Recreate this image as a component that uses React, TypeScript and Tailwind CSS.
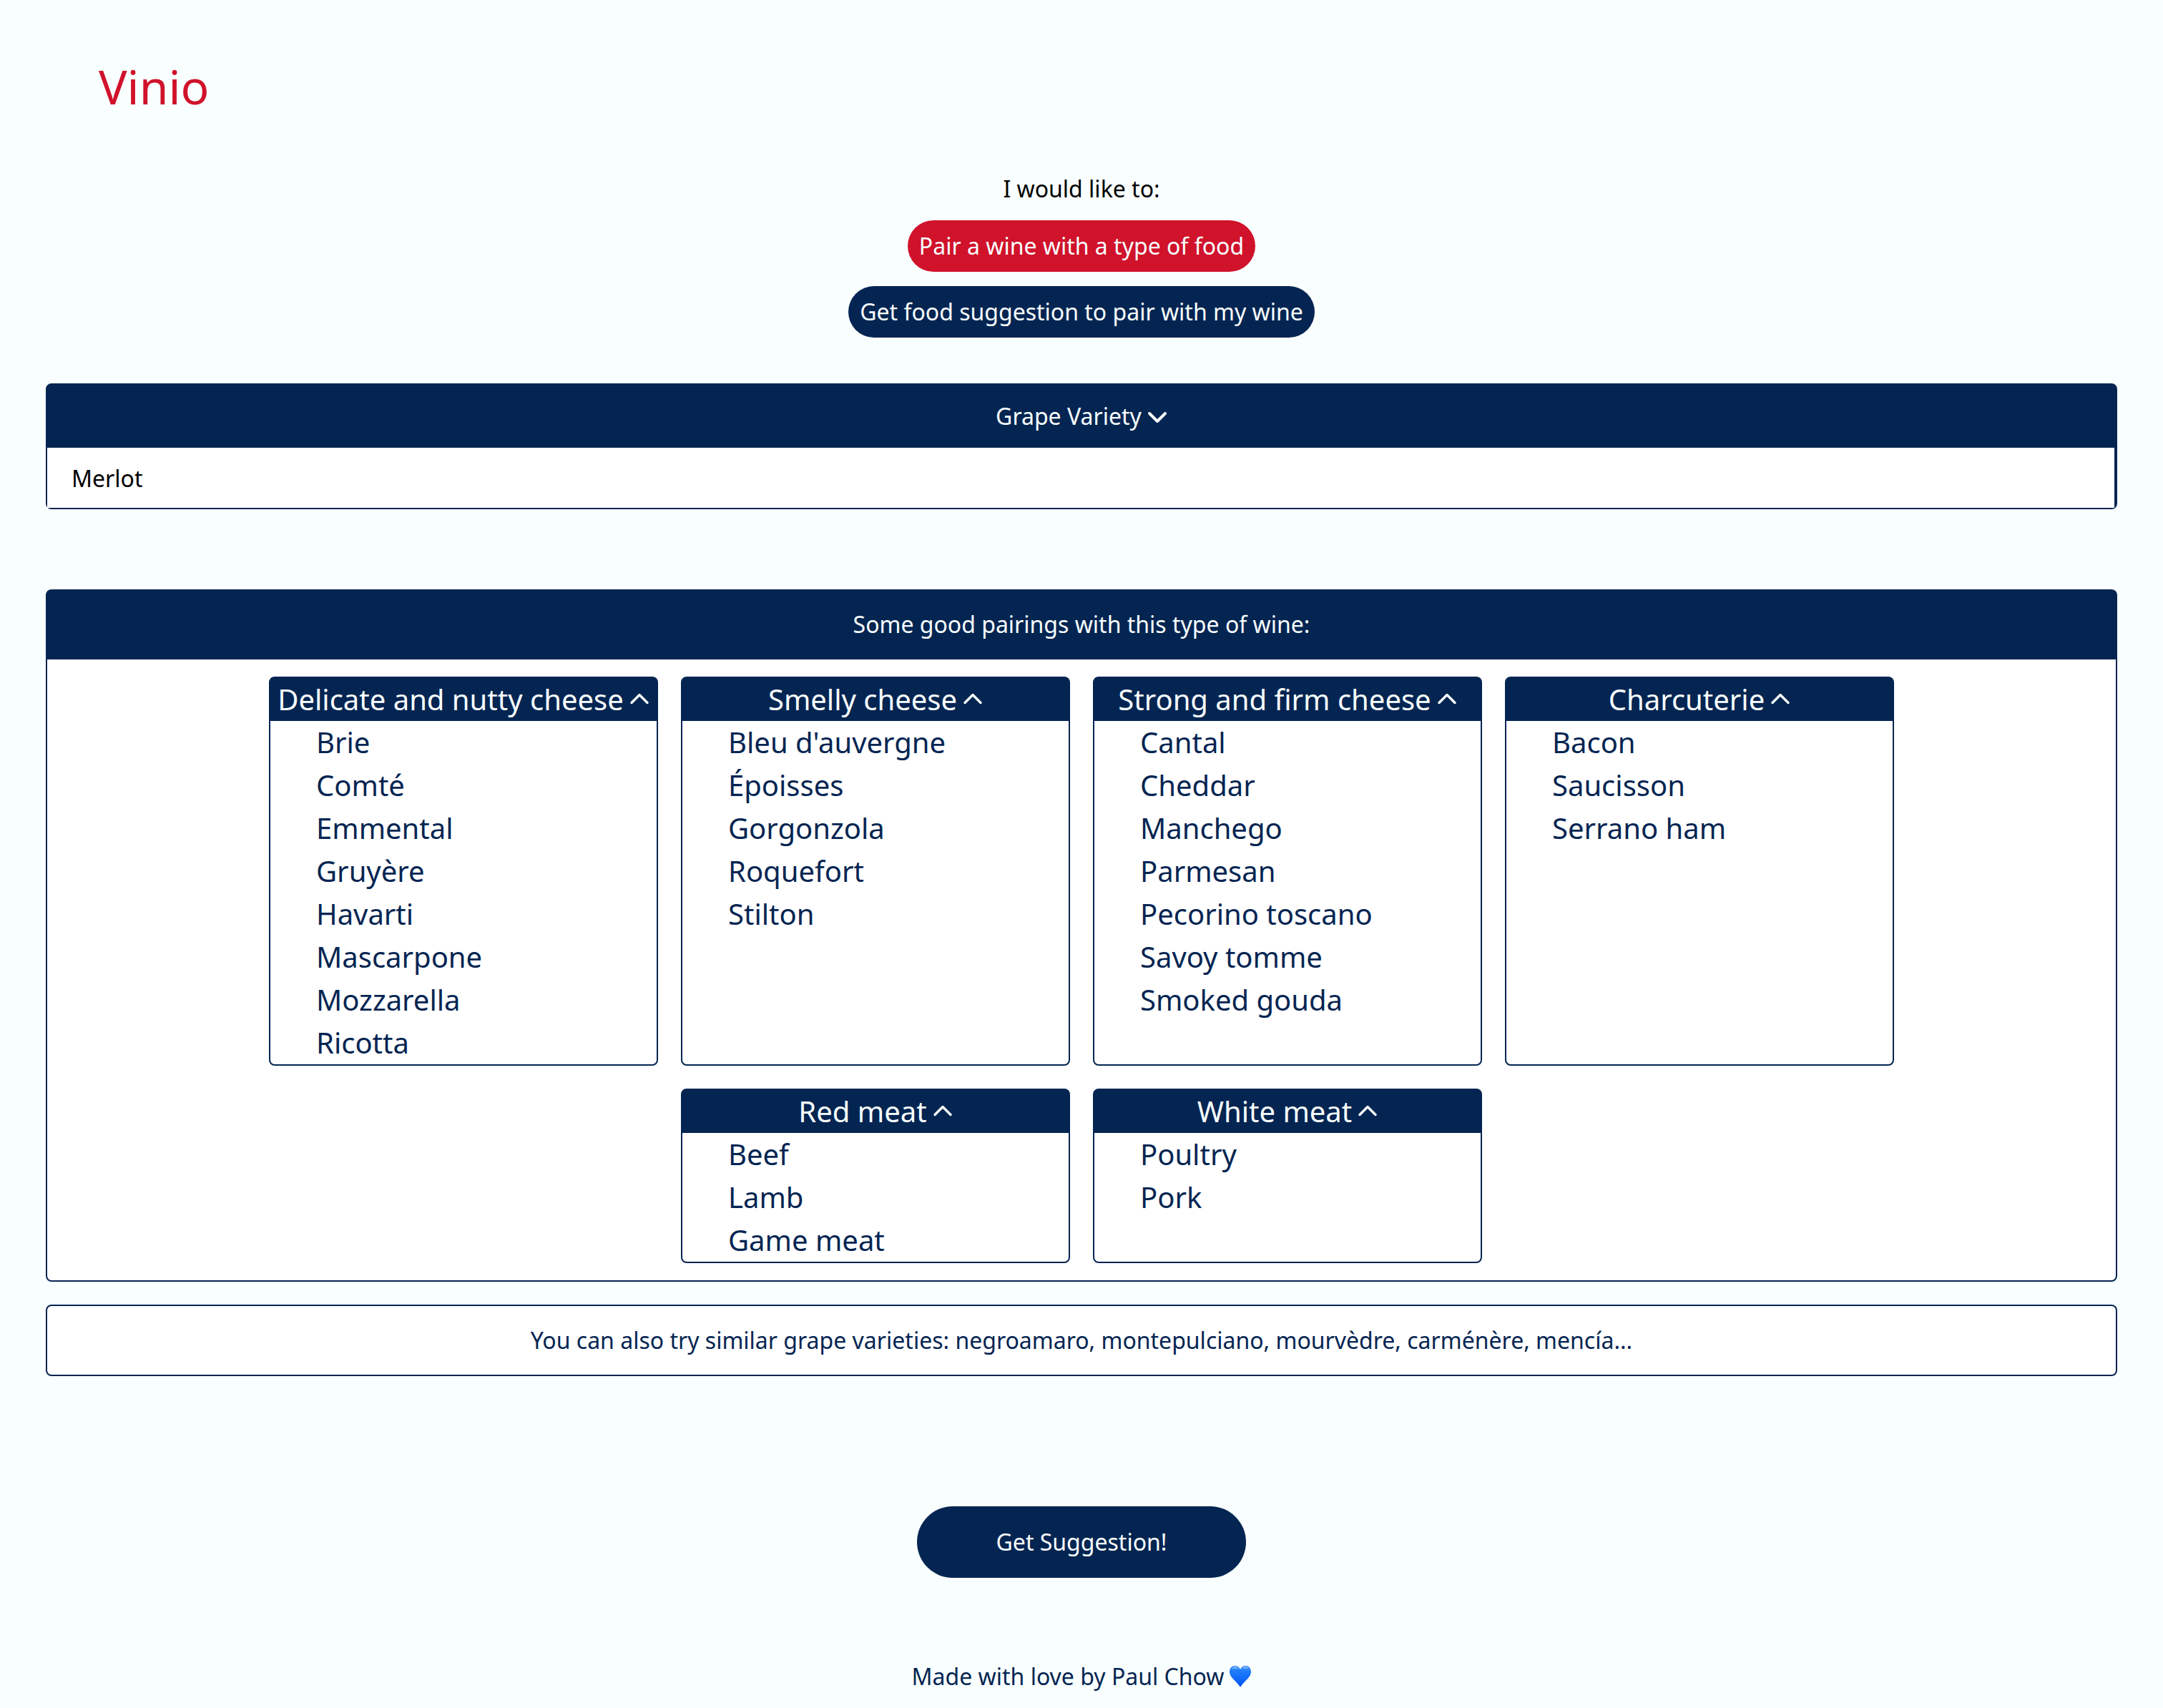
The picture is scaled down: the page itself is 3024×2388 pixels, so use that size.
import React, { useState } from "react";

type Group = { name: string; items: string[] };

const groups: Group[] = [
  {
    name: "Delicate and nutty cheese",
    items: ["Brie", "Comté", "Emmental", "Gruyère", "Havarti", "Mascarpone", "Mozzarella", "Ricotta"],
  },
  { name: "Smelly cheese", items: ["Bleu d'auvergne", "Époisses", "Gorgonzola", "Roquefort", "Stilton"] },
  {
    name: "Strong and firm cheese",
    items: ["Cantal", "Cheddar", "Manchego", "Parmesan", "Pecorino toscano", "Savoy tomme", "Smoked gouda"],
  },
  { name: "Charcuterie", items: ["Bacon", "Saucisson", "Serrano ham"] },
  { name: "Red meat", items: ["Beef", "Lamb", "Game meat"] },
  { name: "White meat", items: ["Poultry", "Pork"] },
];

function Chevron({ up = false }: { up?: boolean }) {
  return (
    <svg
      width="28"
      height="28"
      viewBox="0 0 28 28"
      fill="none"
      stroke="currentColor"
      strokeWidth={up ? 3.4 : 4}
      strokeLinecap="round"
      strokeLinejoin="round"
      aria-hidden="true"
      className="shrink-0"
    >
      <path d={up ? "M3 18.5 14 7.5 25 18.5" : "M3 10 14 21 25 10"} />
    </svg>
  );
}

function Heart() {
  return (
    <svg width="30" height="30" viewBox="0 0 30 30" role="img" aria-label="blue heart">
      <defs>
        <linearGradient id="heart-body" x1="0" y1="0" x2="0" y2="1">
          <stop offset="0" stopColor="#2f86fb" />
          <stop offset="0.45" stopColor="#1672fb" />
          <stop offset="1" stopColor="#0352f0" />
        </linearGradient>
        <linearGradient id="heart-shine" x1="0" y1="0" x2="0" y2="1">
          <stop offset="0" stopColor="#b4dbff" />
          <stop offset="1" stopColor="#2f86fb" stopOpacity="0" />
        </linearGradient>
      </defs>
      <path
        d="M15 30C13.8 27.6 10.6 24.2 7.2 20.6 3.2 16.5 0 12.9 0 8.2 0 3.4 3.3 0 7.6 0 11 0 13.7 1.9 15 5 16.3 1.9 19 0 22.4 0 26.7 0 30 3.4 30 8.2 30 12.9 26.8 16.5 22.8 20.6 19.4 24.2 16.2 27.6 15 30Z"
        fill="url(#heart-body)"
      />
      <path d="M1.8 6.8C2.6 3.2 4.8 1.2 7.6 1.2 10.6 1.2 12.8 3 13.8 6.2 10 4.6 5 4.6 1.8 6.8Z" fill="url(#heart-shine)" />
      <path d="M28.2 6.8C27.4 3.2 25.2 1.2 22.4 1.2 19.4 1.2 17.2 3 16.2 6.2 20 4.6 25 4.6 28.2 6.8Z" fill="url(#heart-shine)" />
    </svg>
  );
}

function PairingCard({ name, items }: Group) {
  const [open, setOpen] = useState(true);
  return (
    <section className="w-[544px] rounded-lg border-2 border-[#042552] bg-white">
      <h3>
        <button
          type="button"
          aria-expanded={open}
          onClick={() => setOpen(!open)}
          className="flex w-full items-center justify-center gap-2 bg-[#042552] text-[40px] leading-[60px] whitespace-nowrap text-[#f9fffe]"
        >
          {name}
          <Chevron up />
        </button>
      </h3>
      {open && (
        <ul className="pl-16 text-[40px] leading-[60px]">
          {items.map((item) => (
            <li key={item}>{item}</li>
          ))}
        </ul>
      )}
    </section>
  );
}

export default function App() {
  return (
    <div className="min-h-screen bg-[#f9fffe] px-16 pt-[72px] pb-5 font-['Noto_Sans',sans-serif] text-[32px] leading-[48px] text-[#042552]">
      <header className="px-[74px]">
        <h1 className="text-[66px] leading-[96px] text-[#d0122b]">Vinio</h1>
      </header>

      <main>
        <div className="mt-[72px] flex flex-col items-center gap-5">
          <p className="text-black">I would like to:</p>
          <button type="button" className="rounded-full bg-[#d0122b] px-4 py-3 text-[#f9fffe]">
            Pair a wine with a type of food
          </button>
          <button type="button" className="rounded-full bg-[#042552] px-4 py-3 text-[#f9fffe]">
            Get food suggestion to pair with my wine
          </button>
        </div>

        <div className="mt-16 rounded-lg border-2 border-[#042552] bg-[#042552]">
          <label htmlFor="grape" className="flex h-[88px] items-center justify-center gap-2 text-[#f9fffe]">
            Grape Variety
            <Chevron />
          </label>
          <div className="pr-0.5">
            <input
              id="grape"
              type="text"
              defaultValue="Merlot"
              className="block h-[84px] w-full bg-white px-[34px] text-black outline-none"
            />
          </div>
        </div>

        <section className="mt-28 rounded-lg border-2 border-[#042552] bg-white">
          <h2 className="bg-[#042552] pt-[23px] pb-[25px] text-center text-[#f9fffe]">
            Some good pairings with this type of wine:
          </h2>
          <div className="mx-auto flex max-w-[2304px] flex-wrap justify-center gap-8 py-6">
            {groups.map((group) => (
              <PairingCard key={group.name} {...group} />
            ))}
          </div>
        </section>

        <p className="mt-8 rounded-lg border-2 border-[#042552] bg-white py-6 text-center">
          You can also try similar grape varieties: negroamaro, montepulciano, mourvèdre, carménère, mencía...
        </p>

        <div className="mt-[182px] flex justify-center">
          <button type="button" className="rounded-full bg-[#042552] px-[111px] py-[26px] text-[#f9fffe]">
            Get Suggestion!
          </button>
        </div>
      </main>

      <footer className="mt-[114px] flex items-center justify-center gap-2">
        Made with love by Paul Chow
        <Heart />
      </footer>
    </div>
  );
}
